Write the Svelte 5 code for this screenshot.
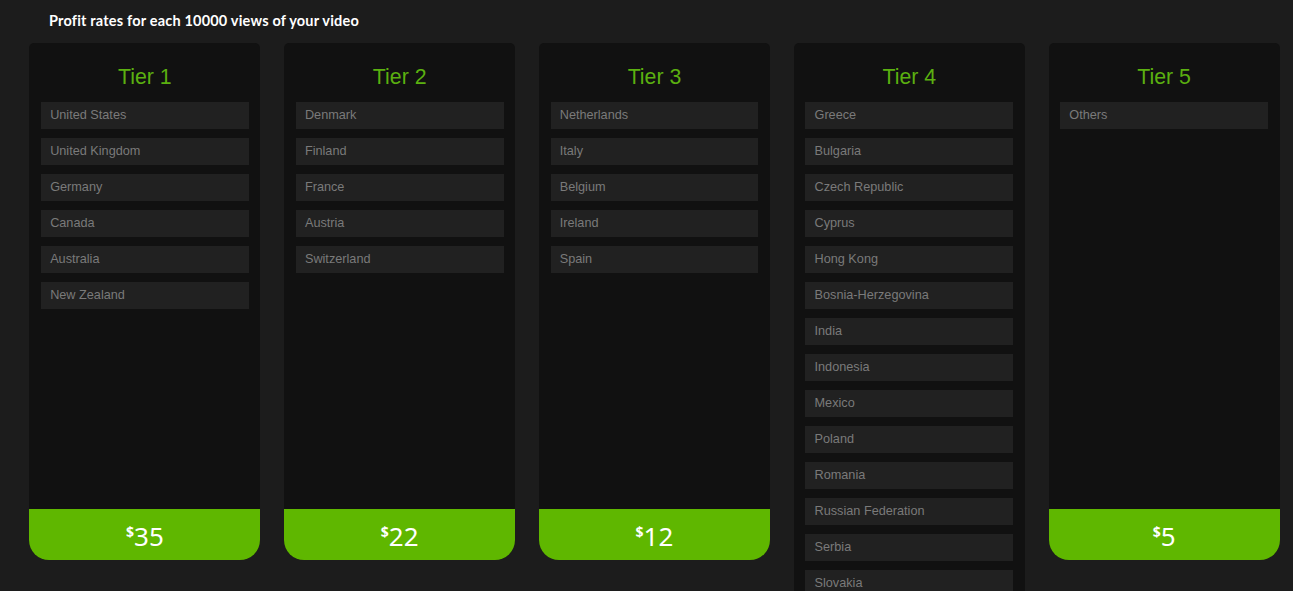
<script lang="ts">
type Tier = { name: string; countries: string[]; price?: string };

const tiers: Tier[] = [
	{
		name: "Tier 1",
		countries: ["United States", "United Kingdom", "Germany", "Canada", "Australia", "New Zealand"],
		price: "35",
	},
	{
		name: "Tier 2",
		countries: ["Denmark", "Finland", "France", "Austria", "Switzerland"],
		price: "22",
	},
	{
		name: "Tier 3",
		countries: ["Netherlands", "Italy", "Belgium", "Ireland", "Spain"],
		price: "12",
	},
	{
		name: "Tier 4",
		countries: [
			"Greece",
			"Bulgaria",
			"Czech Republic",
			"Cyprus",
			"Hong Kong",
			"Bosnia-Herzegovina",
			"India",
			"Indonesia",
			"Mexico",
			"Poland",
			"Romania",
			"Russian Federation",
			"Serbia",
			"Slovakia",
		],
	},
	{
		name: "Tier 5",
		countries: ["Others"],
		price: "5",
	},
];
</script>

<main class="page">
	<h1>Profit rates for each 10000 views of your video</h1>

	<div class="tiers">
		{#each tiers as tier}
			<section class="tier">
				<h2>{tier.name}</h2>
				<ul>
					{#each tier.countries as country}
						<li>{country}</li>
					{/each}
				</ul>
				{#if tier.price}
					<div class="price"><sup>$</sup>{tier.price}</div>
				{/if}
			</section>
		{/each}
	</div>
</main>

<style>
	:global(html),
	:global(body) {
		margin: 0;
		background: #1c1c1c;
	}

	.page {
		height: 591px;
		overflow: hidden;
		padding-left: 29.4px;
		box-sizing: border-box;
		font-family: "Liberation Sans", Arial, sans-serif;
	}

	h1 {
		margin: 0;
		height: 43px;
		padding: 12px 0 0 19.6px;
		box-sizing: border-box;
		font-family: Lato, "Noto Sans", sans-serif;
		font-size: 14.5px;
		line-height: 18px;
		font-weight: 700;
		color: #fff;
		letter-spacing: 0.19px;
	}

	.tiers {
		display: grid;
		grid-template-columns: repeat(5, 231px);
		gap: 23.8px;
		align-items: start;
	}

	.tier {
		display: flex;
		flex-direction: column;
		min-height: 517px;
		background: #111;
		border-radius: 5px 5px 20px 20px;
	}

	h2 {
		margin: 0;
		padding-top: 21px;
		height: 59px;
		box-sizing: border-box;
		text-align: center;
		font-size: 21.3px;
		line-height: 27px;
		font-weight: 400;
		color: #5bb010;
	}

	ul {
		list-style: none;
		margin: 0;
		padding: 0 11.55px 40px;
		display: flex;
		flex-direction: column;
		gap: 9px;
	}

	li {
		height: 27px;
		padding: 0 9.2px;
		background: #212121;
		font-size: 12.7px;
		line-height: 27px;
		color: #7a7a7a;
	}

	.price {
		margin-top: auto;
		height: 51px;
		background: #5fb700;
		border-radius: 0 0 20px 20px;
		text-align: center;
		font-family: "Noto Sans", sans-serif;
		font-size: 26px;
		line-height: 54px;
		color: #fff;
	}

	sup {
		font-size: 14px;
		line-height: 0;
		vertical-align: 9px;
		font-weight: 700;
	}
</style>
